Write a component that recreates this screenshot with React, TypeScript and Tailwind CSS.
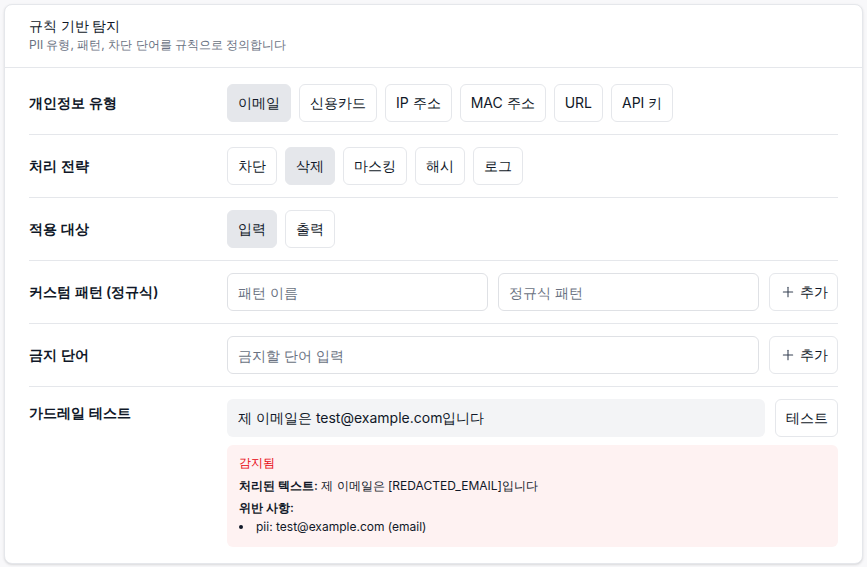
import React from "react";
import { Plus } from "lucide-react";

function Chip({ label, active }: { label: string; active?: boolean }) {
  return (
    <button
      className={
        "h-[38px] rounded-md border px-2.5 text-sm leading-5 text-gray-900 " +
        (active ? "border-gray-200 bg-gray-200" : "border-gray-200 bg-white")
      }
    >
      {label}
    </button>
  );
}

function AddButton() {
  return (
    <button className="flex h-[38px] shrink-0 items-center gap-1 rounded-md border border-gray-200 bg-white pl-2.5 pr-[9px] text-sm text-gray-900">
      <Plus size={16} strokeWidth={1.6} className="text-gray-700" />
      <span>추가</span>
    </button>
  );
}

function Row({
  label,
  children,
  last,
  first,
  top,
}: {
  label: string;
  children: React.ReactNode;
  last?: boolean;
  first?: boolean;
  top?: boolean;
}) {
  return (
    <div
      className={
        "flex " +
        (top ? "items-start " : "items-center ") +
        (first ? "pt-4 " : "pt-3 ") +
        (last ? "pb-4" : "pb-3 border-b border-gray-200")
      }
    >
      <div className={"w-[198px] shrink-0 text-sm font-semibold leading-5 text-gray-900 " + (top ? "pt-1" : "")}>
        {label}
      </div>
      <div className="flex min-w-0 flex-1 flex-col">{children}</div>
    </div>
  );
}

export default function App() {
  const input =
    "h-[38px] min-w-0 flex-1 rounded-md border border-[#dfe1e5] bg-white px-2.5 text-sm text-gray-900 placeholder:text-gray-500 outline-none";
  return (
    <div className="min-h-screen bg-[#f8f8fa] p-1 font-['Inter',sans-serif]">
      <div className="rounded-lg border border-gray-200 bg-white shadow-sm">
        <div className="border-b border-gray-200 px-6 pb-[14px] pt-[11px]">
          <div className="text-sm font-medium leading-5 text-gray-900">규칙 기반 탐지</div>
          <div className="mt-[1px] text-xs leading-4 text-gray-500">
            PII 유형, 패턴, 차단 단어를 규칙으로 정의합니다
          </div>
        </div>
        <div className="px-6">
          <Row label="개인정보 유형" first>
            <div className="flex gap-2">
              <Chip label="이메일" active />
              <Chip label="신용카드" />
              <Chip label="IP 주소" />
              <Chip label="MAC 주소" />
              <Chip label="URL" />
              <Chip label="API 키" />
            </div>
          </Row>
          <Row label="처리 전략">
            <div className="flex gap-2">
              <Chip label="차단" />
              <Chip label="삭제" active />
              <Chip label="마스킹" />
              <Chip label="해시" />
              <Chip label="로그" />
            </div>
          </Row>
          <Row label="적용 대상">
            <div className="flex gap-2">
              <Chip label="입력" active />
              <Chip label="출력" />
            </div>
          </Row>
          <Row label="커스텀 패턴 (정규식)">
            <div className="flex gap-2.5">
              <input className={input} placeholder="패턴 이름" />
              <input className={input} placeholder="정규식 패턴" />
              <AddButton />
            </div>
          </Row>
          <Row label="금지 단어">
            <div className="flex gap-2.5">
              <input className={input} placeholder="금지할 단어 입력" />
              <AddButton />
            </div>
          </Row>
          <Row label="가드레일 테스트" last top>
            <div className="flex gap-2.5">
              <input
                className="h-[38px] min-w-0 flex-1 rounded-md border border-transparent bg-gray-100 px-2.5 text-sm text-gray-900 outline-none"
                defaultValue="제 이메일은 test@example.com입니다"
              />
              <button className="h-[38px] shrink-0 rounded-md border border-gray-200 bg-white pl-2.5 pr-[9px] text-sm text-gray-900">
                테스트
              </button>
            </div>
            <div className="mt-2 rounded-md bg-red-50 px-3 pb-3 pt-2.5 text-xs leading-4 text-gray-900">
              <div className="text-red-600">감지됨</div>
              <div className="mt-[7px]">
                <span className="font-semibold">처리된 텍스트:</span> 제 이메일은 [REDACTED_EMAIL]입니다
              </div>
              <div className="mt-1.5 font-semibold">위반 사항:</div>
              <ul className="mt-[3px] list-inside list-disc">
                <li>pii: test@example.com (email)</li>
              </ul>
            </div>
          </Row>
        </div>
      </div>
    </div>
  );
}
